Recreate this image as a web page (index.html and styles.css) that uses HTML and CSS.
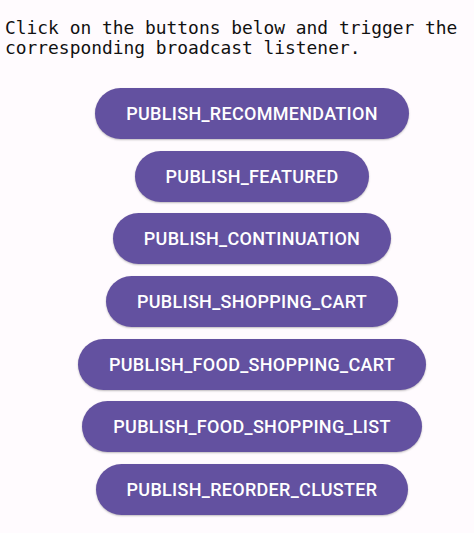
FILE: index.html
```html
<!DOCTYPE html>
<html>
<head>
<meta charset="utf-8">
<link rel="stylesheet" href="styles.css">
</head>
<body>
<main class="screen">
  <p class="intro">Click on the buttons below and trigger the corresponding broadcast listener.</p>
  <div class="actions">
    <button class="pill">PUBLISH_RECOMMENDATION</button>
    <button class="pill">PUBLISH_FEATURED</button>
    <button class="pill">PUBLISH_CONTINUATION</button>
    <button class="pill">PUBLISH_SHOPPING_CART</button>
    <button class="pill">PUBLISH_FOOD_SHOPPING_CART</button>
    <button class="pill">PUBLISH_FOOD_SHOPPING_LIST</button>
    <button class="pill">PUBLISH_REORDER_CLUSTER</button>
  </div>
</main>
</body>
</html>
```
FILE: styles.css
```css
html, body {
  margin: 0;
  padding: 0;
  background: #fffbfe;
}
.screen {
  width: 474px;
  height: 533px;
  box-sizing: border-box;
  padding: 18px 0 0 5px;
}
.intro {
  margin: 0;
  font-family: "DejaVu Sans Mono", monospace;
  font-size: 17.9px;
  line-height: 20px;
  color: #111;
  width: 465px;
}
.actions {
  display: flex;
  flex-direction: column;
  align-items: center;
  gap: 11.7px;
  margin-top: 30px;
  padding-left: 25px;
}
.pill {
  height: 51px;
  padding: 0 31px;
  border: none;
  border-radius: 25.5px;
  background: #6351a0;
  color: #fff;
  font-family: Roboto, "Liberation Sans", sans-serif;
  font-weight: 500;
  font-size: 18px;
  letter-spacing: 0.3px;
  box-shadow: 0 1px 2px rgba(0,0,0,0.25);
}
```
